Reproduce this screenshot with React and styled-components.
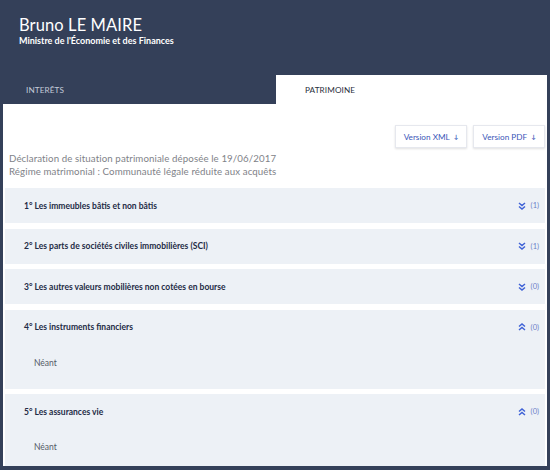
import React from "react";
import styled, { createGlobalStyle } from "styled-components";

const GlobalStyle = createGlobalStyle`
  html, body {
    margin: 0;
    padding: 0;
    background: #344059;
  }
  * {
    box-sizing: border-box;
  }
`;

const Page = styled.div`
  width: 550px;
  height: 470px;
  overflow: hidden;
  background: #344059;
  font-family: Lato, "Noto Sans", sans-serif;
  display: flex;
  flex-direction: column;
`;

const Header = styled.div`
  height: 75px;
  padding: 15px 0 0 19px;
  color: #fff;
`;

const Name = styled.div`
  font-size: 16.5px;
  font-weight: 400;
  line-height: 20px;
  letter-spacing: 0.1px;
`;

const Role = styled.div`
  font-size: 9px;
  font-weight: 700;
  line-height: 11px;
`;

const Tabs = styled.div`
  display: grid;
  grid-template-columns: 276px 271px;
  height: 29px;
`;

const Tab = styled.div`
  display: flex;
  align-items: center;
  padding-left: ${(p) => (p.$active ? "29px" : "26px")};
  background: ${(p) => (p.$active ? "#fff" : "transparent")};
  color: ${(p) => (p.$active ? "#2a2f3d" : "#c3cad7")};
  font-size: 8.2px;
  text-transform: uppercase;
  letter-spacing: 0.1px;
`;

const Content = styled.div`
  flex: 1;
  margin: 0 3px 4px 3px;
  background: #fff;
  padding: 21px 2px 0 2px;
  overflow: hidden;
`;

const Actions = styled.div`
  display: flex;
  justify-content: flex-end;
  gap: 6px;
`;

const DownloadButton = styled.button`
  width: 72px;
  height: 23px;
  border: 1px solid #e6e8ee;
  background: #fff;
  box-shadow: 0 1px 2px rgba(0, 0, 0, 0.12);
  color: #3a56b8;
  font-family: inherit;
  font-size: 8.2px;
  padding: 0;
  display: flex;
  align-items: center;
  justify-content: center;
  gap: 4px;
`;

const Arrow = styled.span`
  font-size: 6px;
  font-weight: 700;
`;

const Summary = styled.div`
  margin: 4px 0 0 4px;
  color: #808288;
  font-size: 9.7px;
  line-height: 13px;
  letter-spacing: 0.1px;
`;

const Sections = styled.div`
  margin-top: 10px;
  display: flex;
  flex-direction: column;
  gap: 5.5px;
`;

const Section = styled.div`
  background: #edf1f6;
`;

const SectionHead = styled.div`
  height: 35px;
  display: flex;
  align-items: center;
  justify-content: space-between;
  padding: 0 6px 0 19px;
`;

const Title = styled.div`
  color: #232b45;
  font-size: 8.5px;
  font-weight: 700;
`;

const Counter = styled.div`
  display: flex;
  align-items: center;
  gap: 5px;
  color: #6b80c8;
  font-size: 7.5px;
`;

const SectionBody = styled.div`
  padding: 13px 0 21px 29px;
  color: #555a66;
  font-size: 8.5px;
`;

const Chevrons = ({ up }) => (
  <svg width="8" height="8" viewBox="0 0 8 8" style={{ transform: up ? "rotate(180deg)" : "none" }}>
    <path d="M1 1 L4 3.5 L7 1 M1 4.5 L4 7 L7 4.5" fill="none" stroke="#3f62d6" strokeWidth="1.5" />
  </svg>
);

const sections = [
  { title: "1° Les immeubles bâtis et non bâtis", count: 1 },
  { title: "2° Les parts de sociétés civiles immobilières (SCI)", count: 1 },
  { title: "3° Les autres valeurs mobilières non cotées en bourse", count: 0 },
  { title: "4° Les instruments financiers", count: 0, open: true },
  { title: "5° Les assurances vie", count: 0, open: true },
];

const App = () => {
  return (
    <Page>
      <GlobalStyle />
      <Header>
        <Name>Bruno LE MAIRE</Name>
        <Role>Ministre de l'Économie et des Finances</Role>
      </Header>
      <Tabs>
        <Tab>Interêts</Tab>
        <Tab $active>Patrimoine</Tab>
      </Tabs>
      <Content>
        <Actions>
          <DownloadButton>
            Version XML <Arrow>↓</Arrow>
          </DownloadButton>
          <DownloadButton>
            Version PDF <Arrow>↓</Arrow>
          </DownloadButton>
        </Actions>
        <Summary>
          Déclaration de situation patrimoniale déposée le 19/06/2017
          <br />
          Régime matrimonial : Communauté légale réduite aux acquêts
        </Summary>
        <Sections>
          {sections.map((s) => (
            <Section key={s.title}>
              <SectionHead>
                <Title>{s.title}</Title>
                <Counter>
                  <Chevrons up={s.open} />
                  ({s.count})
                </Counter>
              </SectionHead>
              {s.open && <SectionBody>Néant</SectionBody>}
            </Section>
          ))}
        </Sections>
      </Content>
    </Page>
  );
};

export default App;
